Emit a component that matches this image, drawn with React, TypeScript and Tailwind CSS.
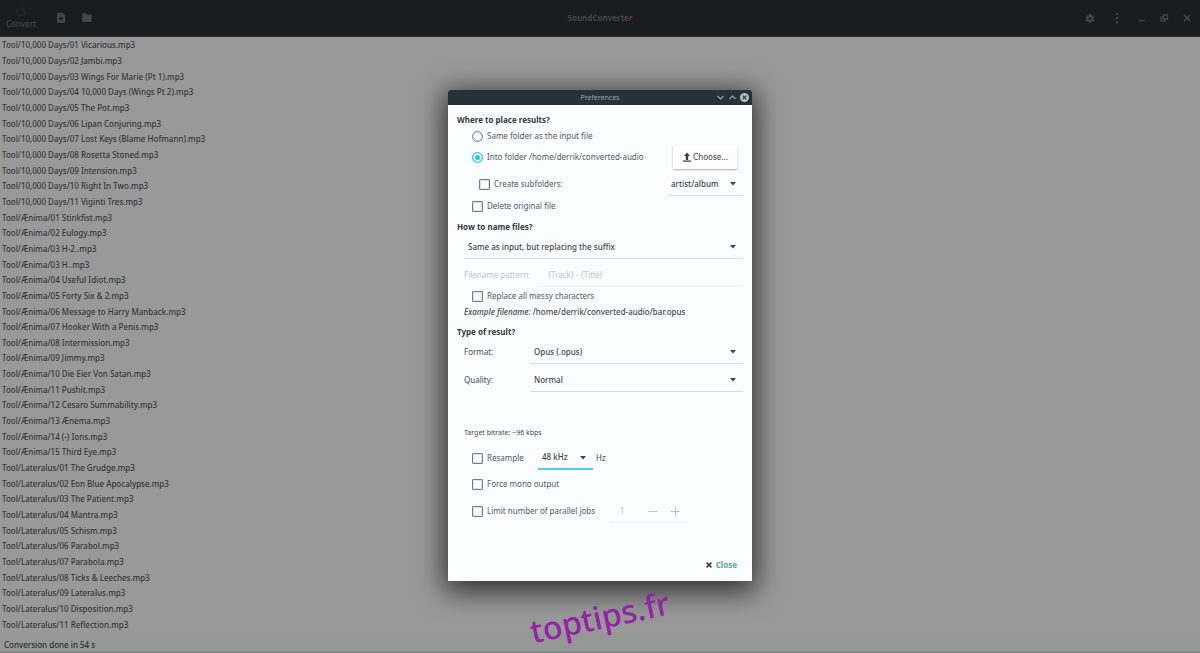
import type { ReactNode } from 'react'
import { clsx } from 'clsx'

const tracks = [
  '10,000 Days/01 Vicarious',
  '10,000 Days/02 Jambi',
  '10,000 Days/03 Wings For Marie (Pt 1)',
  '10,000 Days/04 10,000 Days (Wings Pt 2)',
  '10,000 Days/05 The Pot',
  '10,000 Days/06 Lipan Conjuring',
  '10,000 Days/07 Lost Keys (Blame Hofmann)',
  '10,000 Days/08 Rosetta Stoned',
  '10,000 Days/09 Intension',
  '10,000 Days/10 Right In Two',
  '10,000 Days/11 Viginti Tres',
  'Ænima/01 Stinkfist',
  'Ænima/02 Eulogy',
  'Ænima/03 H-2.',
  'Ænima/03 H.',
  'Ænima/04 Useful Idiot',
  'Ænima/05 Forty Six & 2',
  'Ænima/06 Message to Harry Manback',
  'Ænima/07 Hooker With a Penis',
  'Ænima/08 Intermission',
  'Ænima/09 Jimmy',
  'Ænima/10 Die Eier Von Satan',
  'Ænima/11 Pushit',
  'Ænima/12 Cesaro Summability',
  'Ænima/13 Ænema',
  'Ænima/14 (-) Ions',
  'Ænima/15 Third Eye',
  'Lateralus/01 The Grudge',
  'Lateralus/02 Eon Blue Apocalypse',
  'Lateralus/03 The Patient',
  'Lateralus/04 Mantra',
  'Lateralus/05 Schism',
  'Lateralus/06 Parabol',
  'Lateralus/07 Parabola',
  'Lateralus/08 Ticks & Leeches',
  'Lateralus/09 Lateralus',
  'Lateralus/10 Disposition',
  'Lateralus/11 Reflection',
]

const Header = () => (
  <header className="relative flex h-[37px] shrink-0 items-center justify-between border-b border-[#2c3032] bg-[#1a1b1c] pr-[7px] pl-[3px] text-[#434648]">
    <div className="flex items-center">
      <button className="flex w-9 flex-col items-center leading-3 font-medium">
        <svg viewBox="0 0 12 12" className="size-3 text-[#27292a]" fill="none" stroke="currentColor" strokeWidth="1.2">
          <path d="M1.800 7.500V5.500a2.500 2.500 0 0 1 2.500-2.500H8.500M10.200 4.500v2A2.500 2.500 0 0 1 7.700 9H3.500" />
          <path d="M7 1.300L8.800 3 7 4.700M5 7.300L3.200 9 5 10.700" />
        </svg>
        Convert
      </button>
      <button aria-label="Add file" className="ml-[15px] p-px">
        <svg viewBox="0 0 12 12" className="size-3" fill="currentColor" fillRule="evenodd">
          <path d="M3 1h4.500L10 3.500V10a1 1 0 0 1-1 1H3a1 1 0 0 1-1-1V2a1 1 0 0 1 1-1zM5.300 4.500v1.300H4v1.400h1.300v1.300h1.400V7.200H8V5.800H6.700V4.500z" />
        </svg>
      </button>
      <button aria-label="Add folder" className="ml-3 p-px">
        <svg viewBox="0 0 12 12" className="size-3" fill="currentColor">
          <path d="M2 1.200h3l1 1.200h4a.8.8 0 0 1 .8.800v6a.8.8 0 0 1-.8.800H2a.8.8 0 0 1-.8-.8V2A.8.8 0 0 1 2 1.200z" />
        </svg>
      </button>
    </div>
    <h1 className="pointer-events-none absolute inset-x-0 text-center font-bold">SoundConverter</h1>
    <div className="flex items-center">
      <button aria-label="Preferences">
        <svg viewBox="0 0 24 24" className="size-[11px]" fill="currentColor" fillRule="evenodd">
          <path d="M20.400 13.200a8.500 8.500 0 0 0 0-2.400l2.300-1.800-2.300-4-2.700 1.100a8.500 8.500 0 0 0-2-1.200L15.300 2h-4.600l-.4 2.900a8.500 8.500 0 0 0-2 1.200L5.600 5l-2.300 4 2.300 1.800a8.500 8.500 0 0 0 0 2.400L3.300 15l2.300 4 2.700-1.100a8.500 8.500 0 0 0 2 1.200l.4 2.900h4.600l.4-2.900a8.500 8.500 0 0 0 2-1.200l2.700 1.100 2.300-4zM13 15.500a3.500 3.500 0 1 1 0-7 3.500 3.500 0 0 1 0 7z" />
        </svg>
      </button>
      <button aria-label="Menu" className="ml-4">
        <svg viewBox="0 0 12 12" className="size-3" fill="currentColor">
          <circle cx="6" cy="1.700" r="1.200" />
          <circle cx="6" cy="6" r="1.200" />
          <circle cx="6" cy="10.300" r="1.200" />
        </svg>
      </button>
      <button aria-label="Minimize" className="ml-3">
        <svg viewBox="0 0 12 12" className="size-3" fill="currentColor">
          <path d="M3.500 7.800h6v1.500h-6z" />
        </svg>
      </button>
      <button aria-label="Restore" className="ml-[11px]">
        <svg viewBox="0 0 12 12" className="size-3" fill="none" stroke="currentColor" strokeWidth="1.300">
          <path d="M5.500 3h4v4h-4z" />
          <path d="M5.500 5.200H3v4h4V7" />
        </svg>
      </button>
      <button aria-label="Quit" className="ml-[11px]">
        <svg viewBox="0 0 12 12" className="size-3" stroke="currentColor" strokeWidth="1.500">
          <path d="M3 3l6 6M9 3l-6 6" />
        </svg>
      </button>
    </div>
  </header>
)

interface CheckProps {
  label: string
  type?: 'checkbox' | 'radio'
  checked?: boolean
}

const Check = ({ label, type = 'checkbox', checked }: CheckProps) => (
  <label className="flex items-center gap-1 whitespace-nowrap text-[#4f5b5e]">
    <input
      type={type}
      name={type === 'radio' ? 'place' : undefined}
      defaultChecked={checked}
      className={clsx(
        'size-[11px] shrink-0 appearance-none border border-[#747e81] shadow-[inset_0_0_0_1px_#dfe2e3]',
        type === 'radio'
          ? 'rounded-full checked:border-[#2bc4dc] checked:bg-[#2bc4dc] checked:shadow-[inset_0_0_0_2px_#e3f6fa]'
          : 'rounded-[1px] checked:bg-[#2bc4dc]',
      )}
    />
    {label}
  </label>
)

interface SelectProps {
  label: string
  value: string
  className?: string
}

const Select = ({ label, value, className }: SelectProps) => (
  <div className={clsx('relative h-6 border-b', className)}>
    <select aria-label={label} className="h-full w-full appearance-none pr-4 pl-1 font-medium text-[#3c484c] outline-none">
      <option>{value}</option>
    </select>
    <svg viewBox="0 0 8 4" className="pointer-events-none absolute top-[10px] right-[6px] h-1 w-2" fill="#37474f">
      <path d="M1 0h6L4 3.600z" />
    </svg>
  </div>
)

const Heading = ({ children }: { children: ReactNode }) => (
  <h3 className="h-4 font-bold text-[#2f3c41]">{children}</h3>
)

const TitleBar = () => (
  <div className="relative flex h-[15px] items-center justify-end gap-[3px] rounded-t-[2px] bg-[#263238] pr-[3px] text-[#9aa5a8]">
    <h2 className="pointer-events-none absolute inset-x-0 text-center text-[7px]">Preferences</h2>
    <button aria-label="Shade">
      <svg viewBox="0 0 9 9" className="size-[9px]" fill="none" stroke="currentColor" strokeWidth="1.100">
        <path d="M1.500 3l3 3 3-3" />
      </svg>
    </button>
    <button aria-label="Maximize">
      <svg viewBox="0 0 9 9" className="size-[9px]" fill="none" stroke="currentColor" strokeWidth="1.100">
        <path d="M1.500 6l3-3 3 3" />
      </svg>
    </button>
    <button aria-label="Close window">
      <svg viewBox="0 0 9 9" className="size-[9px]">
        <circle cx="4.500" cy="4.500" r="4.500" fill="#b4bec1" />
        <path d="M2.700 2.700l3.600 3.600M6.300 2.700L2.700 6.300" stroke="#263238" strokeWidth="1.100" />
      </svg>
    </button>
  </div>
)

const PreferencesDialog = () => (
  <div
    role="dialog"
    aria-label="Preferences"
    className="w-[304px] rounded-t-[2px] bg-[#fbfcfd] leading-4 text-[#3f4b4f] shadow-[0_6px_28px_4px_rgba(0,0,0,0.7)]"
  >
    <TitleBar />
    <div className="px-[9px] pt-[7px] pb-2">
      <Heading>Where to place results?</Heading>
      <div className="pl-[7px]">
        <div className="flex h-4 items-center pl-2">
          <Check type="radio" label="Same folder as the input file" />
        </div>
        <div className="flex h-[26px] items-center justify-between pr-[6px] pl-2">
          <Check type="radio" label="Into folder /home/derrik/converted-audio" checked />
          <button className="flex h-6 w-16 items-center justify-center gap-px rounded-[1px] bg-white font-medium text-[#4b5356] shadow-[0_1px_2px_rgba(0,0,0,0.3)]">
            <svg viewBox="0 0 10 10" className="size-[10px]" fill="#37403f">
              <path d="M5 .5l3 3.500H6.200V8H3.800V4H2zM1 8.500h8v1.200H1z" />
            </svg>
            Choose...
          </button>
        </div>
        <div className="mt-[2px] flex h-6 items-center justify-between pl-[15px]">
          <Check label="Create subfolders:" />
          <Select label="Subfolder layout" value="artist/album" className="w-[76px] border-[#d9dcdd]" />
        </div>
        <div className="mt-[2px] flex h-4 items-center pl-2">
          <Check label="Delete original file" />
        </div>
      </div>

      <div className="mt-[5px]">
        <Heading>How to name files?</Heading>
        <div className="pl-[7px]">
          <Select label="Naming" value="Same as input, but replacing the suffix" className="border-[#d9dcdd]" />
          <label className="mt-1 flex h-6 items-center justify-between whitespace-nowrap text-[#c0c5c6]">
            Filename pattern:
            <input
              disabled
              defaultValue="{Track} - {Title}"
              className="h-full w-[205px] border-b border-[#f0f1f2] pl-[10px]"
            />
          </label>
          <div className="mt-px flex h-4 items-center pl-2">
            <Check label="Replace all messy characters" />
          </div>
          <p className="h-4 font-medium">
            <em>Example filename:</em> /home/derrik/converted-audio/bar.opus
          </p>
        </div>
      </div>

      <div className="mt-1">
        <Heading>Type of result?</Heading>
        <div className="pl-[7px]">
          <div className="flex h-6 items-center justify-between">
            <span>Format:</span>
            <Select label="Format" value="Opus (.opus)" className="w-[213px] border-[#d9dcdd]" />
          </div>
          <div className="mt-1 flex h-6 items-center justify-between">
            <span>Quality:</span>
            <Select label="Quality" value="Normal" className="w-[213px] border-[#d9dcdd]" />
          </div>
          <p className="mt-[33px] h-4 text-[7px]">Target bitrate: ~96 kbps</p>
          <div className="mt-[5px] flex h-6 items-center pl-2">
            <div className="w-[66px]">
              <Check label="Resample" />
            </div>
            <Select label="Sample rate" value="48 kHz" className="w-[55px] border-b-2 border-[#4dd0e1]" />
            <span className="ml-[3px]">Hz</span>
          </div>
          <div className="mt-[6px] flex h-4 items-center pl-2">
            <Check label="Force mono output" />
          </div>
          <div className="mt-[7px] flex h-6 items-center pl-2">
            <div className="w-[138px]">
              <Check label="Limit number of parallel jobs" />
            </div>
            <div className="flex h-full w-[77px] items-center border-b border-[#f0f1f2] text-[#bcc1c2]">
              <input aria-label="Parallel jobs" disabled defaultValue="1" className="w-[38px] pl-[10px]" />
              <button aria-label="Decrease" disabled>
                <svg viewBox="0 0 10 10" className="size-[10px]" stroke="currentColor">
                  <path d="M.5 5.500h9" />
                </svg>
              </button>
              <button aria-label="Increase" disabled className="ml-3">
                <svg viewBox="0 0 10 10" className="size-[10px]" stroke="currentColor">
                  <path d="M.5 5.500h9M5.500 1v9" />
                </svg>
              </button>
            </div>
          </div>
        </div>
      </div>

      <div className="mt-[34px] flex justify-end pr-[6px]">
        <button className="flex h-4 items-center gap-1 font-bold text-[#54a79b]">
          <svg viewBox="0 0 6 6" className="size-[6px]" stroke="#37403f" strokeWidth="1.600">
            <path d="M.6.600l4.800 4.800M5.400.600L.6 5.400" />
          </svg>
          Close
        </button>
      </div>
    </div>
  </div>
)

export default function App() {
  return (
    <div className="relative flex min-h-screen flex-col overflow-hidden bg-[#999999] font-['Noto_Sans','Open_Sans',sans-serif] text-[8px]">
      <Header />
      <ul className="grid flex-1 auto-rows-fr pl-[2px] leading-[15px] font-medium text-[#333637]">
        {tracks.map((track) => (
          <li key={track} className="flex items-center">
            Tool/{track}.mp3
          </li>
        ))}
      </ul>
      <footer className="h-[21px] shrink-0 border-b-2 border-[#858786] bg-[#969897] pt-[5px] pl-1 leading-4 font-medium text-[#2b2e2f]">
        Conversion done in 54 s
      </footer>
      <div className="absolute inset-x-0 top-[90px] flex flex-col items-center">
        <PreferencesDialog />
        <p className="mt-4 -rotate-12 text-[32px] leading-[40px] font-medium text-[#9322a6]">toptips.fr</p>
      </div>
    </div>
  )
}
